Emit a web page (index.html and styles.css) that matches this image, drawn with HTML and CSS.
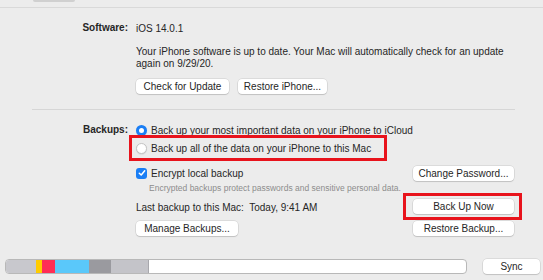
FILE: index.html
```html
<!DOCTYPE html>
<html lang="en">
<head>
    <meta charset="UTF-8">
    <meta name="viewport" content="width=device-width, initial-scale=1.0">
    <title>iPhone - General</title>
    <link rel="stylesheet" href="styles.css">
</head>
<body>

    <!-- Barra de abas (recortada) -->
    <div class="tabs">
        <div class="tab"></div>
    </div>

    <!-- Software -->
    <div class="section software">
        <div class="label">Software:</div>
        <div class="content">
            <div class="row version">iOS 14.0.1</div>
            <p class="info">Your iPhone software is up to date. Your Mac will automatically check for an update<br>again on 9/29/20.</p>
            <div class="buttons">
                <button class="btn btn-check">Check for Update</button>
                <button class="btn btn-restore">Restore iPhone...</button>
            </div>
        </div>
    </div>

    <div class="divider"></div>

    <!-- Backups -->
    <div class="section backups">
        <div class="label">Backups:</div>
        <div class="content">
            <div class="row option">
                <span class="radio checked"></span>
                <span>Back up your most important data on your iPhone to iCloud</span>
            </div>
            <div class="row option marked">
                <span class="radio"></span>
                <span>Back up all of the data on your iPhone to this Mac</span>
            </div>
            <div class="row option split encrypt">
                <div class="option">
                    <span class="checkbox">
                        <svg width="8" height="8" viewBox="0 0 8 8"><path d="M1.3 4.2 L3.2 6 L6.7 1.8" fill="none" stroke="#fff" stroke-width="1.5" stroke-linecap="round" stroke-linejoin="round"/></svg>
                    </span>
                    <span>Encrypt local backup</span>
                </div>
                <button class="btn btn-side">Change Password...</button>
            </div>
            <div class="note">Encrypted backups protect passwords and sensitive personal data.</div>
            <div class="row split last">
                <span>Last backup to this Mac:&nbsp; Today, 9:41 AM</span>
                <button class="btn btn-side marked-btn">Back Up Now</button>
            </div>
            <div class="row split manage">
                <button class="btn btn-manage">Manage Backups...</button>
                <button class="btn btn-side">Restore Backup...</button>
            </div>
        </div>
    </div>

    <!-- Armazenamento -->
    <div class="footer">
        <div class="storage">
            <span class="seg seg-other" style="width: 30px"></span>
            <span class="seg seg-yellow" style="width: 6px"></span>
            <span class="seg seg-pink" style="width: 13px"></span>
            <span class="seg seg-blue" style="width: 34px"></span>
            <span class="seg seg-dark" style="width: 22px"></span>
            <span class="seg seg-light" style="width: 37px"></span>
        </div>
        <button class="btn btn-sync">Sync</button>
    </div>

</body>
</html>
```

FILE: styles.css
```css
body {
    margin: 0;
    width: 543px;
    height: 280px;
    overflow: hidden;
    background: #ececec;
    font-family: "Liberation Sans", Arial, sans-serif;
    font-size: 10px;
    color: #262626;
}
.tabs {
    height: 7px;
    border-bottom: 1px solid #d9d9d9;
}
.tab {
    width: 42px;
    height: 2px;
    margin-left: 33px;
    background: #d0d0d0;
    border-radius: 0 0 2px 2px;
}
.section {
    display: grid;
    grid-template-columns: 128px 378px;
    column-gap: 8px;
}
.software {
    margin-top: 14px;
}
.label {
    text-align: right;
    font-weight: bold;
    height: 12px;
    line-height: 12px;
}
.backups .label {
    margin-top: 3px;
}
.row {
    display: flex;
    align-items: center;
}
.version {
    height: 12px;
}
.info {
    margin: 12px 0 0;
    line-height: 11.5px;
}
.buttons {
    display: flex;
    gap: 9px;
    margin-top: 10px;
}
.btn {
    height: 15px;
    padding: 0;
    border: none;
    border-radius: 4px;
    background: #fff;
    box-shadow: 0 0 0 0.5px rgba(0, 0, 0, 0.14), 0 1px 1px rgba(0, 0, 0, 0.12);
    font-family: inherit;
    font-size: 10px;
    color: #262626;
    text-align: center;
}
.btn-check {
    width: 93px;
}
.btn-restore {
    width: 89px;
}
.btn-side {
    width: 101px;
}
.btn-manage {
    width: 102px;
}
.divider {
    height: 1px;
    width: 483px;
    margin: 15px 0 0 32px;
    background: #d6d6d6;
}
.backups {
    margin-top: 11px;
}
.option {
    display: flex;
    align-items: center;
    gap: 4px;
    height: 18px;
}
.radio {
    width: 11px;
    height: 11px;
    box-sizing: border-box;
    border-radius: 50%;
    background: #fff;
    border: 0.5px solid #c4c4c4;
    box-shadow: 0 0.5px 1px rgba(0, 0, 0, 0.12);
}
.radio.checked {
    border: 3.5px solid #1a7ef5;
}
.checkbox {
    width: 11px;
    height: 11px;
    border-radius: 3px;
    background: #1a7ef5;
    display: flex;
    align-items: center;
    justify-content: center;
}
.split {
    justify-content: space-between;
}
.encrypt {
    margin-top: 7px;
}
.note {
    margin: 1px 0 0 13px;
    height: 10px;
    line-height: 10px;
    font-size: 8.5px;
    color: #8c8c8c;
}
.last {
    height: 16px;
    margin-top: 5px;
}
.last span {
    padding-top: 3px;
}
.manage {
    margin-top: 7px;
}

/* Marcações em vermelho sobre a captura */
.marked, .marked-btn {
    position: relative;
}
.marked::after {
    content: "";
    position: absolute;
    left: -7px;
    top: -4px;
    width: 252px;
    height: 20px;
    border: 3px solid #e8131c;
}
.marked-btn::after {
    content: "";
    position: absolute;
    left: -10px;
    top: -6px;
    width: 113px;
    height: 21px;
    border: 3px solid #e8131c;
}

.footer {
    display: flex;
    align-items: center;
    gap: 16px;
    margin: 23px 0 0 5px;
}
.storage {
    display: flex;
    width: 460px;
    height: 13px;
    border: 1px solid #b8b8b8;
    border-radius: 4px;
    background: #fff;
    overflow: hidden;
}
.seg {
    height: 100%;
}
.seg-other { background: #c8c8cd; }
.seg-yellow { background: #ffcc00; }
.seg-pink { background: #ff2d55; }
.seg-blue { background: #5ac8fa; }
.seg-dark { background: #9a9a9f; }
.seg-light { background: #c4c4c9; border-right: 1px solid #a8a8ad; }
.btn-sync {
    width: 57px;
}
```
